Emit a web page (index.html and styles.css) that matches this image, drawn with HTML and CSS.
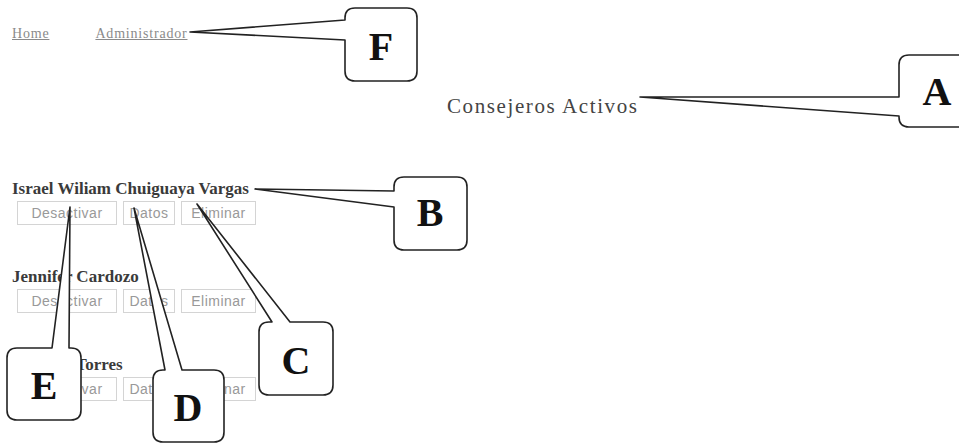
FILE: index.html
```html
<!DOCTYPE html>
<html lang="es">
<head>
  <meta charset="UTF-8" />
  <title>Consejeros Activos</title>
  <link rel="stylesheet" href="styles.css">
</head>
<body>
  <div class="nav">
    <a href="#">Home</a>
    <a href="#">Administrador</a>
  </div>

  <h2 class="title">Consejeros Activos</h2>

  <div class="list">
    <div class="consejero">
      <div class="name">Israel Wiliam Chuiguaya Vargas</div>
      <div class="actions">
        <button class="btn btn-off">Desactivar</button>
        <button class="btn btn-data">Datos</button>
        <button class="btn btn-del">Eliminar</button>
      </div>
    </div>
    <div class="consejero">
      <div class="name">Jennifer Cardozo</div>
      <div class="actions">
        <button class="btn btn-off">Desactivar</button>
        <button class="btn btn-data">Datos</button>
        <button class="btn btn-del">Eliminar</button>
      </div>
    </div>
    <div class="consejero">
      <div class="name">Cristina Torres</div>
      <div class="actions">
        <button class="btn btn-off">Desactivar</button>
        <button class="btn btn-data">Datos</button>
        <button class="btn btn-del">Eliminar</button>
      </div>
    </div>
  </div>

  <!-- callouts -->
  <svg class="callouts" width="959" height="443" viewBox="0 0 959 443">
    <g class="bubble">
      <path d="M 355 8 H 407 Q 417 8 417 18 V 71 Q 417 81 407 81 H 355 Q 345 81 345 71 V 40 L 190 32 L 345 20 V 18 Q 345 8 355 8 Z"/>
      <path d="M 909 55 H 965 Q 975 55 975 65 V 117 Q 975 127 965 127 H 909 Q 899 127 899 117 V 116 L 640 97 L 899 97 V 65 Q 899 55 909 55 Z"/>
      <path d="M 404 177 H 457 Q 467 177 467 187 V 240 Q 467 250 457 250 H 404 Q 394 250 394 240 V 207 L 255 189 L 394 191 V 187 Q 394 177 404 177 Z"/>
      <path d="M 269 322 H 272 L 197 204 L 290 322 H 323 Q 333 322 333 332 V 385 Q 333 395 323 395 H 269 Q 259 395 259 385 V 332 Q 259 322 269 322 Z"/>
      <path d="M 163 370 H 165 L 134 208 L 182 370 H 214 Q 224 370 224 380 V 432 Q 224 442 214 442 H 163 Q 153 442 153 432 V 380 Q 153 370 163 370 Z"/>
      <path d="M 17 348 H 52 L 70 207 L 69 348 H 71 Q 81 348 81 358 V 410 Q 81 420 71 420 H 17 Q 7 420 7 410 V 358 Q 7 348 17 348 Z"/>
    </g>
    <g class="label">
      <text x="381" y="60">F</text>
      <text x="937" y="105">A</text>
      <text x="430" y="226">B</text>
      <text x="296" y="374">C</text>
      <text x="188" y="421">D</text>
      <text x="44" y="399">E</text>
    </g>
  </svg>
</body>
</html>
```

FILE: styles.css
```css
body {
  margin: 0;
  font-family: 'Liberation Serif', 'Times New Roman', serif;
  color: #333;
  background: white;
}
.nav {
  padding: 23px 0 0 12px;
  line-height: 20px;
}
.nav a {
  font-size: 14px;
  letter-spacing: 0.8px;
  color: #8a8a8a;
  margin-right: 42px;
}
.title {
  margin: 49px 0 0 447px;
  font-size: 21px;
  line-height: 26px;
  font-weight: normal;
  letter-spacing: 1.6px;
  color: #444;
}
.list {
  margin: 60px 0 0 12px;
}
.consejero {
  margin-bottom: 42px;
}
.name {
  font-size: 17px;
  line-height: 20px;
  font-weight: bold;
  color: #3a3a3a;
}
.actions {
  display: flex;
  gap: 6px;
  margin: 2px 0 0 5px;
}
.btn {
  height: 24px;
  padding: 0;
  font-family: 'Liberation Sans', Arial, sans-serif;
  font-size: 14px;
  letter-spacing: 0.5px;
  color: #999;
  background: white;
  border: 1px solid #d4d4d4;
  border-radius: 0;
}
.btn-off {
  width: 100px;
}
.btn-data {
  width: 52px;
}
.btn-del {
  width: 75px;
}
.callouts {
  position: absolute;
  top: 0;
  left: 0;
  pointer-events: none;
}
.bubble path {
  fill: white;
  stroke: #222;
  stroke-width: 1.6;
  stroke-linejoin: round;
}
.label text {
  font-family: 'Liberation Serif', 'Times New Roman', serif;
  font-size: 40px;
  font-weight: bold;
  text-anchor: middle;
  fill: #111;
}
```
